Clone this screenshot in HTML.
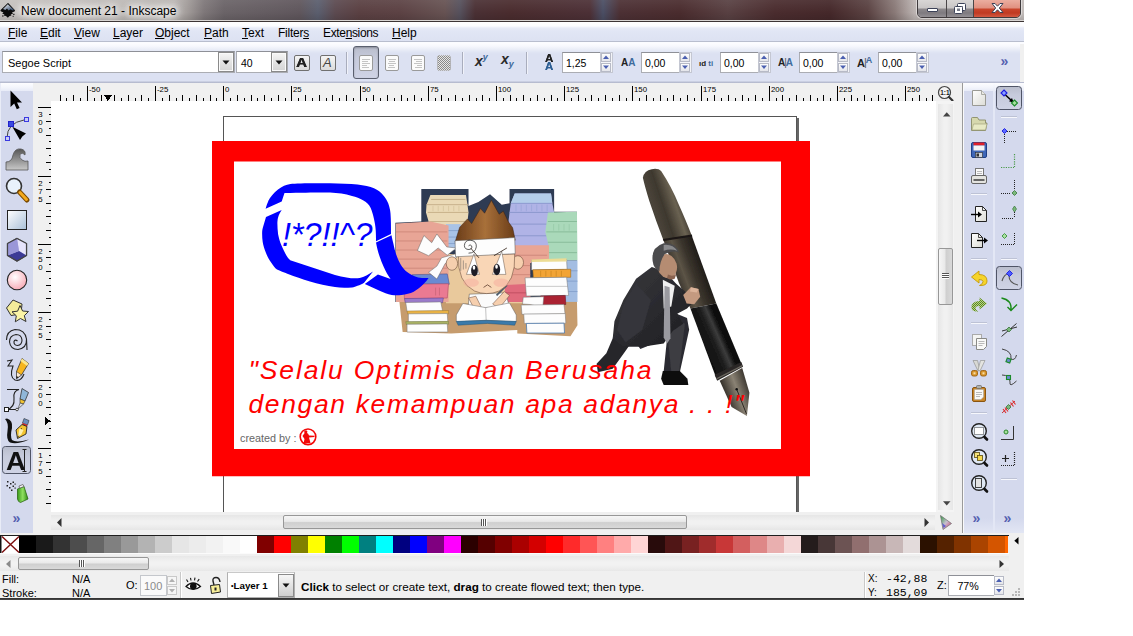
<!DOCTYPE html>
<html lang="en">
<head>
<meta charset="utf-8">
<title>New document 21 - Inkscape</title>
<style>
html,body{margin:0;padding:0;background:#fff;}
body{width:1133px;height:636px;overflow:hidden;position:relative;font-family:"Liberation Sans",sans-serif;font-size:12px;color:#000;}
#win{position:absolute;left:0;top:0;width:1024px;height:600px;background:#f0f0f0;overflow:hidden;}
.abs{position:absolute;}
#title{left:0;top:0;width:1024px;height:21px;background:linear-gradient(90deg,#c6c2bf 0px,#bab5b2 174px,#a29c9a 187px,#7e7779 204px,#6a6367 224px,#5f565c 300px,#5a5e6e 318px,#5c4a50 335px,#5a4042 360px,#5c4244 400px,#665252 445px,#55505c 460px,#4a3034 475px,#4a2c2e 510px,#4c3036 590px,#4a4e64 603px,#4c3034 620px,#4a2c2e 680px,#584042 728px,#4a2c2e 775px,#45282a 830px,#5a4242 868px,#8a7a78 895px,#bcb4b2 915px,#c2bcba 1024px);}
#title:after{content:"";position:absolute;left:0;top:0;width:1024px;height:21px;background:linear-gradient(180deg,rgba(255,255,255,.07),rgba(255,255,255,0) 60%,rgba(0,0,0,.12));}
#ttext{left:21px;top:4px;font-size:12px;line-height:15px;color:#000;white-space:nowrap;z-index:2;text-shadow:0 0 6px #fff,0 0 8px #fff,0 0 10px #fff,0 0 12px #fff;}
#tline{left:0;top:20px;width:1024px;height:2px;background:linear-gradient(180deg,#d8d5d3 0,#d8d5d3 1px,#3d3636 1px,#3d3636 2px);z-index:3;}
#menubar{left:0;top:22px;width:1024px;height:21px;background:linear-gradient(180deg,#ffffff 0,#fcfdff 4px,#e8ecf8 6px,#e1e6f5 9px,#dde2f2 19px,#b9bece 19px,#b9bece 20px,#fbfcff 20px);}
.mi{position:absolute;top:26px;line-height:15px;font-size:12px;white-space:nowrap;}
.mi u{text-decoration:underline;text-underline-offset:1px;}
#tbar{left:0;top:43px;width:1024px;height:40px;background:linear-gradient(180deg,#fdfdff 0,#f7f8fd 3px,#eceff8 6px,#e0e5f4 9px,#dce1f2 11px,#dce1f2 38px,#b9bed2 39px,#b4b9cd 40px);}
.inp{position:absolute;background:#fff;border:1px solid #abadb3;border-top-color:#8e9097;box-sizing:border-box;font-size:12px;line-height:15px;white-space:nowrap;}
.btn{position:absolute;box-sizing:border-box;border:1px solid #707070;border-radius:2px;background:linear-gradient(180deg,#f4f4f4,#dcdcdc);}
.tog{position:absolute;box-sizing:border-box;border:1px solid #5a5f6e;border-radius:3px;background:linear-gradient(180deg,#b9bdcc,#c6cadb 35%,#cfd3e5);box-shadow:inset 0 1px 2px rgba(0,0,0,.25);}
.lav{background:#d5daee;}
svg{position:absolute;overflow:visible;}
.t{position:absolute;white-space:nowrap;line-height:15px;}
</style>
</head>
<body>
<div id="win">

<div id="title" class="abs"></div>
<svg class="abs" style="left:0;top:0;z-index:2" width="20" height="20" viewBox="0 0 20 20">
<defs><linearGradient id="ikg" x1="0" y1="0" x2="1" y2="1"><stop offset="0" stop-color="#fff"/><stop offset=".45" stop-color="#9aa6b8"/><stop offset="1" stop-color="#1d3557"/></linearGradient></defs>
<path d="M7.6 3.2 L0.6 10 Q0 11 1.2 11.6 L3.5 12.6 L2.2 13.6 L4.5 14.4 L3.6 15.4 L6 16 L7.8 17.8 L9.6 16 L11.5 15.4 L10.6 14.4 L13 13.8 L12 12.6 L14.4 11.6 Q15.6 11 14.8 10 L8.4 3.2 Q8 2.8 7.6 3.2Z" fill="#0a0a0a"/>
<path d="M7.8 4.2 L3 9 L5.4 10 L7 8.6 L8.6 10.4 L10.6 9.2 L12.6 10.4 L14 10 Z" fill="url(#ikg)"/>
<rect x="2" y="15.5" width="1.6" height="1" fill="#111"/><rect x="13" y="13.8" width="1.6" height="1" fill="#111"/><rect x="12.6" y="15.8" width="1.2" height="1" fill="#222"/>
</svg>
<div class="abs" style="left:917px;top:-3px;width:104px;height:21px;border:1px solid #3f3a3c;border-radius:0 0 5px 5px;box-sizing:border-box;z-index:2;box-shadow:0 0 0 1px rgba(255,255,255,.45);overflow:hidden;">
 <div class="abs" style="left:0;top:0;width:28px;height:20px;background:linear-gradient(180deg,#dcdad9 0,#c9c6c6 10px,#8d898c 11px,#7e7a7f 15px,#9a969a 20px);border-right:1px solid #4a4648;"></div>
 <div class="abs" style="left:29px;top:0;width:26px;height:20px;background:linear-gradient(180deg,#dcdad9 0,#c9c6c6 10px,#8d898c 11px,#7e7a7f 15px,#9a969a 20px);border-right:1px solid #4a4648;"></div>
 <div class="abs" style="left:56px;top:0;width:48px;height:20px;background:linear-gradient(180deg,#eeb5a8 0,#e09080 10px,#c9452c 11px,#c03a22 15px,#d8604a 20px);"></div>
</div>
<svg class="abs" style="left:917px;top:0;z-index:3" width="104" height="18" viewBox="0 0 104 18">
 <rect x="10.5" y="8.5" width="10" height="3" rx="0.5" fill="#fff" stroke="#3c4258" stroke-width="1"/>
 <rect x="40.500" y="3.500" width="8" height="7" rx="1" fill="#fff" stroke="#3c4258"/><rect x="43" y="6" width="3" height="2" fill="#8a8c96"/>
 <rect x="37.500" y="6.500" width="8" height="7" rx="1" fill="#fff" stroke="#3c4258"/><rect x="40" y="8.500" width="3" height="2.500" fill="#777a88"/>
 <path d="M75 3.500 L78 3.500 L80.500 6.200 L83 3.500 L86 3.500 L82.300 8 L86 12.500 L83 12.500 L80.500 9.800 L78 12.500 L75 12.500 L78.700 8 Z" fill="#fff" stroke="#3c4258" stroke-width="1" stroke-linejoin="round"/>
</svg>

<div id="ttext" class="abs">New document 21 - Inkscape</div>
<div id="tline" class="abs"></div>
<div id="menubar" class="abs"></div>
<div class="mi" style="left:8px"><u>F</u>ile</div>
<div class="mi" style="left:40px"><u>E</u>dit</div>
<div class="mi" style="left:74px"><u>V</u>iew</div>
<div class="mi" style="left:113px"><u>L</u>ayer</div>
<div class="mi" style="left:155px"><u>O</u>bject</div>
<div class="mi" style="left:204px"><u>P</u>ath</div>
<div class="mi" style="left:242px"><u>T</u>ext</div>
<div class="mi" style="left:278px"><span style="letter-spacing:-0.25px">Filter<u>s</u></span></div>
<div class="mi" style="left:323px"><span style="letter-spacing:-0.35px">Exte<u>n</u>sions</span></div>
<div class="mi" style="left:392px"><u>H</u>elp</div>
<div id="tbar" class="abs"></div><div id="tbarend" class="abs" style="left:1020px;top:44px;width:4px;height:38px;background:#f0f0f0"></div>
<div class="inp" style="left:2px;top:51px;width:233px;height:22px;padding:4px 0 0 5px;font-size:11px">Segoe Script</div>
<div class="abs" style="left:218px;top:52px;width:16px;height:20px;box-sizing:border-box;border:1px solid #8a8a8a;background:linear-gradient(180deg,#f6f6f6,#e3e3e3 50%,#d4d4d4);box-shadow:inset 0 0 0 1px #fafafa"></div><svg style="left:222.0px;top:60.0px" width="8" height="5"><path d="M0.500 0.500 L7.500 0.500 L4 4.500 Z" fill="#111"/></svg>
<div class="inp" style="left:236px;top:51px;width:52px;height:22px;padding:4px 0 0 4px;font-size:10.500px">40</div>
<div class="abs" style="left:271px;top:52px;width:16px;height:20px;box-sizing:border-box;border:1px solid #8a8a8a;background:linear-gradient(180deg,#f6f6f6,#e3e3e3 50%,#d4d4d4);box-shadow:inset 0 0 0 1px #fafafa"></div><svg style="left:275.0px;top:60.0px" width="8" height="5"><path d="M0.500 0.500 L7.500 0.500 L4 4.500 Z" fill="#111"/></svg>
<div class="btn" style="left:294px;top:55px;width:16px;height:16px"></div>
<div class="t" style="left:296px;top:55px;font-weight:bold;font-size:13px;color:#222;transform:scaleX(1.15);transform-origin:0 0;text-shadow:0 0 .6px #222,.4px 0 0 #222">A</div>
<div class="btn" style="left:320px;top:55px;width:16px;height:16px"></div>
<div class="t" style="left:323px;top:55px;font-style:italic;font-size:13px;color:#444">A</div>
<div class="abs" style="left:346px;top:52px;width:1px;height:22px;background:#a9adbd"></div><div class="abs" style="left:347px;top:52px;width:1px;height:22px;background:#f0f2fa"></div>
<div class="abs" style="left:462px;top:52px;width:1px;height:22px;background:#a9adbd"></div><div class="abs" style="left:463px;top:52px;width:1px;height:22px;background:#f0f2fa"></div>
<div class="abs" style="left:526px;top:52px;width:1px;height:22px;background:#a9adbd"></div><div class="abs" style="left:527px;top:52px;width:1px;height:22px;background:#f0f2fa"></div>
<div class="tog" style="left:353px;top:46px;width:26px;height:33px"></div>
<svg style="left:359px;top:55px" width="14" height="16" viewBox="0 0 14 16"><rect x="0.500" y="0.500" width="13" height="15" rx="1.500" fill="#fbfbfb" stroke="#9a9a9a"/><rect x="3" y="4" width="8" height="1" fill="#c4c4c4" shape-rendering="crispEdges"/><rect x="3" y="6" width="6" height="1" fill="#c4c4c4" shape-rendering="crispEdges"/><rect x="3" y="8" width="8" height="1" fill="#c4c4c4" shape-rendering="crispEdges"/><rect x="3" y="10" width="5" height="1" fill="#c4c4c4" shape-rendering="crispEdges"/><rect x="3" y="12" width="7" height="1" fill="#c4c4c4" shape-rendering="crispEdges"/></svg>
<svg style="left:385px;top:55px" width="14" height="16" viewBox="0 0 14 16"><rect x="0.500" y="0.500" width="13" height="15" rx="1.500" fill="#fbfbfb" stroke="#9a9a9a"/><rect x="3" y="4" width="8" height="1" fill="#c4c4c4" shape-rendering="crispEdges"/><rect x="4" y="6" width="6" height="1" fill="#c4c4c4" shape-rendering="crispEdges"/><rect x="3" y="8" width="8" height="1" fill="#c4c4c4" shape-rendering="crispEdges"/><rect x="4" y="10" width="5" height="1" fill="#c4c4c4" shape-rendering="crispEdges"/><rect x="3" y="12" width="7" height="1" fill="#c4c4c4" shape-rendering="crispEdges"/></svg>
<svg style="left:411px;top:55px" width="14" height="16" viewBox="0 0 14 16"><rect x="0.500" y="0.500" width="13" height="15" rx="1.500" fill="#fbfbfb" stroke="#9a9a9a"/><rect x="3" y="4" width="8" height="1" fill="#c4c4c4" shape-rendering="crispEdges"/><rect x="5" y="6" width="6" height="1" fill="#c4c4c4" shape-rendering="crispEdges"/><rect x="3" y="8" width="8" height="1" fill="#c4c4c4" shape-rendering="crispEdges"/><rect x="6" y="10" width="5" height="1" fill="#c4c4c4" shape-rendering="crispEdges"/><rect x="4" y="12" width="7" height="1" fill="#c4c4c4" shape-rendering="crispEdges"/></svg>
<svg style="left:437px;top:55px" width="14" height="16" viewBox="0 0 14 16"><defs><pattern id="dots" width="2" height="2" patternUnits="userSpaceOnUse"><rect width="1" height="1" fill="#8a8a8a"/><rect x="1" y="1" width="1" height="1" fill="#8a8a8a"/></pattern></defs><rect x="0.500" y="0.500" width="13" height="15" rx="1.500" fill="#e6e6e6"/><rect x="0.500" y="0.500" width="13" height="15" rx="1.500" fill="url(#dots)" stroke="#aaa" stroke-dasharray="1 1"/></svg>
<div class="t" style="left:475px;top:54px;font-weight:bold;font-style:italic;font-size:14px;color:#2b2b2b">x<span style="font-size:9px;color:#3d6a9c;position:relative;top:-6px;left:0px">y</span></div>
<div class="t" style="left:501px;top:52px;font-weight:bold;font-style:italic;font-size:14px;color:#2b2b2b">x<span style="font-size:9px;color:#3d6a9c;position:relative;top:3px;left:0px">y</span></div>
<div class="t" style="left:544.500px;top:54px;font-weight:bold;font-size:10px;line-height:9px;color:#222;transform:scaleX(1.15);transform-origin:0 0;text-shadow:0 0 .5px #222">A</div>
<div class="t" style="left:544.500px;top:62px;font-weight:bold;font-size:10px;line-height:9px;color:#2d5f94;transform:scaleX(1.15);transform-origin:0 0;text-shadow:0 0 .5px #2d5f94">A</div>
<div class="inp" style="left:562px;top:52px;width:38px;height:21px;padding:3px 0 0 3px;border-right:0;font-size:10.500px">1,25</div><div class="abs" style="left:600px;top:52px;width:13px;height:21px;box-sizing:border-box;border:1px solid #c4c7d2;background:#f3f4f8"></div><div class="abs" style="left:601px;top:53px;width:10px;height:9px;box-sizing:border-box;border:1px solid #b7bac6;background:linear-gradient(180deg,#fdfdfd,#e4e5ea)"></div><div class="abs" style="left:601px;top:63px;width:10px;height:9px;box-sizing:border-box;border:1px solid #b7bac6;background:linear-gradient(180deg,#fdfdfd,#e4e5ea)"></div><svg style="left:603px;top:55px" width="6" height="14"><path d="M0 4 L3 0.500 L6 4Z" fill="#4a5fb0"/><path d="M0 10.500 L3 14 L6 10.500Z" fill="#4a5fb0"/></svg>
<div class="inp" style="left:641px;top:52px;width:38px;height:21px;padding:3px 0 0 3px;border-right:0;font-size:10.500px">0,00</div><div class="abs" style="left:679px;top:52px;width:13px;height:21px;box-sizing:border-box;border:1px solid #c4c7d2;background:#f3f4f8"></div><div class="abs" style="left:680px;top:53px;width:10px;height:9px;box-sizing:border-box;border:1px solid #b7bac6;background:linear-gradient(180deg,#fdfdfd,#e4e5ea)"></div><div class="abs" style="left:680px;top:63px;width:10px;height:9px;box-sizing:border-box;border:1px solid #b7bac6;background:linear-gradient(180deg,#fdfdfd,#e4e5ea)"></div><svg style="left:682px;top:55px" width="6" height="14"><path d="M0 4 L3 0.500 L6 4Z" fill="#4a5fb0"/><path d="M0 10.500 L3 14 L6 10.500Z" fill="#4a5fb0"/></svg>
<div class="inp" style="left:720px;top:52px;width:38px;height:21px;padding:3px 0 0 3px;border-right:0;font-size:10.500px">0,00</div><div class="abs" style="left:758px;top:52px;width:13px;height:21px;box-sizing:border-box;border:1px solid #c4c7d2;background:#f3f4f8"></div><div class="abs" style="left:759px;top:53px;width:10px;height:9px;box-sizing:border-box;border:1px solid #b7bac6;background:linear-gradient(180deg,#fdfdfd,#e4e5ea)"></div><div class="abs" style="left:759px;top:63px;width:10px;height:9px;box-sizing:border-box;border:1px solid #b7bac6;background:linear-gradient(180deg,#fdfdfd,#e4e5ea)"></div><svg style="left:761px;top:55px" width="6" height="14"><path d="M0 4 L3 0.500 L6 4Z" fill="#4a5fb0"/><path d="M0 10.500 L3 14 L6 10.500Z" fill="#4a5fb0"/></svg>
<div class="inp" style="left:799px;top:52px;width:38px;height:21px;padding:3px 0 0 3px;border-right:0;font-size:10.500px">0,00</div><div class="abs" style="left:837px;top:52px;width:13px;height:21px;box-sizing:border-box;border:1px solid #c4c7d2;background:#f3f4f8"></div><div class="abs" style="left:838px;top:53px;width:10px;height:9px;box-sizing:border-box;border:1px solid #b7bac6;background:linear-gradient(180deg,#fdfdfd,#e4e5ea)"></div><div class="abs" style="left:838px;top:63px;width:10px;height:9px;box-sizing:border-box;border:1px solid #b7bac6;background:linear-gradient(180deg,#fdfdfd,#e4e5ea)"></div><svg style="left:840px;top:55px" width="6" height="14"><path d="M0 4 L3 0.500 L6 4Z" fill="#4a5fb0"/><path d="M0 10.500 L3 14 L6 10.500Z" fill="#4a5fb0"/></svg>
<div class="inp" style="left:878px;top:52px;width:38px;height:21px;padding:3px 0 0 3px;border-right:0;font-size:10.500px">0,00</div><div class="abs" style="left:916px;top:52px;width:13px;height:21px;box-sizing:border-box;border:1px solid #c4c7d2;background:#f3f4f8"></div><div class="abs" style="left:917px;top:53px;width:10px;height:9px;box-sizing:border-box;border:1px solid #b7bac6;background:linear-gradient(180deg,#fdfdfd,#e4e5ea)"></div><div class="abs" style="left:917px;top:63px;width:10px;height:9px;box-sizing:border-box;border:1px solid #b7bac6;background:linear-gradient(180deg,#fdfdfd,#e4e5ea)"></div><svg style="left:919px;top:55px" width="6" height="14"><path d="M0 4 L3 0.500 L6 4Z" fill="#4a5fb0"/><path d="M0 10.500 L3 14 L6 10.500Z" fill="#4a5fb0"/></svg>
<div class="t" style="left:621px;top:55px;font-weight:bold;font-size:10px;color:#222;letter-spacing:0">A<span style="color:#3d6a9c">A</span></div>
<div class="t" style="left:699px;top:56px;font-weight:bold;font-size:8px;color:#222">ıd <span style="color:#3d6a9c">ti</span></div>
<div class="t" style="left:778px;top:55px;font-weight:bold;font-size:10px;color:#222">A<span style="color:#555;font-weight:normal;margin:0 -1px">|</span><span style="color:#3d6a9c">A</span></div>
<div class="t" style="left:857px;top:56px;font-weight:bold;font-size:11px;color:#222">A<span style="color:#555;font-weight:normal;margin:0 -1px;position:relative;top:-1px">|</span><span style="color:#3d6a9c;font-size:9px;position:relative;top:-4px">A</span></div>
<div class="t" style="left:1000.500px;top:54px;font-size:14px;color:#5560b0;letter-spacing:-1.500px;font-weight:bold">&raquo;</div>
<div class="abs" style="left:33px;top:83px;width:930px;height:18px;background:#f0f0f0"></div>
<div class="abs" style="left:33px;top:101px;width:18px;height:411px;background:#f0f0f0"></div>
<svg style="left:0;top:83px" width="940" height="18" viewBox="0 83 940 18" shape-rendering="crispEdges"><rect x="60" y="95" width="1" height="6" fill="#000"/><rect x="66" y="98" width="1" height="3" fill="#000"/><rect x="73" y="95" width="1" height="6" fill="#000"/><rect x="80" y="98" width="1" height="3" fill="#000"/><rect x="87" y="86" width="1" height="15" fill="#000"/><rect x="94" y="98" width="1" height="3" fill="#000"/><rect x="101" y="95" width="1" height="6" fill="#000"/><rect x="107" y="98" width="1" height="3" fill="#000"/><rect x="114" y="95" width="1" height="6" fill="#000"/><rect x="121" y="98" width="1" height="3" fill="#000"/><rect x="128" y="95" width="1" height="6" fill="#000"/><rect x="135" y="98" width="1" height="3" fill="#000"/><rect x="141" y="95" width="1" height="6" fill="#000"/><rect x="148" y="98" width="1" height="3" fill="#000"/><rect x="155" y="86" width="1" height="15" fill="#000"/><rect x="162" y="98" width="1" height="3" fill="#000"/><rect x="169" y="95" width="1" height="6" fill="#000"/><rect x="176" y="98" width="1" height="3" fill="#000"/><rect x="182" y="95" width="1" height="6" fill="#000"/><rect x="189" y="98" width="1" height="3" fill="#000"/><rect x="196" y="95" width="1" height="6" fill="#000"/><rect x="203" y="98" width="1" height="3" fill="#000"/><rect x="210" y="95" width="1" height="6" fill="#000"/><rect x="216" y="98" width="1" height="3" fill="#000"/><rect x="223" y="86" width="1" height="15" fill="#000"/><rect x="230" y="98" width="1" height="3" fill="#000"/><rect x="237" y="95" width="1" height="6" fill="#000"/><rect x="244" y="98" width="1" height="3" fill="#000"/><rect x="251" y="95" width="1" height="6" fill="#000"/><rect x="257" y="98" width="1" height="3" fill="#000"/><rect x="264" y="95" width="1" height="6" fill="#000"/><rect x="271" y="98" width="1" height="3" fill="#000"/><rect x="278" y="95" width="1" height="6" fill="#000"/><rect x="285" y="98" width="1" height="3" fill="#000"/><rect x="291" y="86" width="1" height="15" fill="#000"/><rect x="298" y="98" width="1" height="3" fill="#000"/><rect x="305" y="95" width="1" height="6" fill="#000"/><rect x="312" y="98" width="1" height="3" fill="#000"/><rect x="319" y="95" width="1" height="6" fill="#000"/><rect x="326" y="98" width="1" height="3" fill="#000"/><rect x="332" y="95" width="1" height="6" fill="#000"/><rect x="339" y="98" width="1" height="3" fill="#000"/><rect x="346" y="95" width="1" height="6" fill="#000"/><rect x="353" y="98" width="1" height="3" fill="#000"/><rect x="360" y="86" width="1" height="15" fill="#000"/><rect x="366" y="98" width="1" height="3" fill="#000"/><rect x="373" y="95" width="1" height="6" fill="#000"/><rect x="380" y="98" width="1" height="3" fill="#000"/><rect x="387" y="95" width="1" height="6" fill="#000"/><rect x="394" y="98" width="1" height="3" fill="#000"/><rect x="401" y="95" width="1" height="6" fill="#000"/><rect x="407" y="98" width="1" height="3" fill="#000"/><rect x="414" y="95" width="1" height="6" fill="#000"/><rect x="421" y="98" width="1" height="3" fill="#000"/><rect x="428" y="86" width="1" height="15" fill="#000"/><rect x="435" y="98" width="1" height="3" fill="#000"/><rect x="441" y="95" width="1" height="6" fill="#000"/><rect x="448" y="98" width="1" height="3" fill="#000"/><rect x="455" y="95" width="1" height="6" fill="#000"/><rect x="462" y="98" width="1" height="3" fill="#000"/><rect x="469" y="95" width="1" height="6" fill="#000"/><rect x="476" y="98" width="1" height="3" fill="#000"/><rect x="482" y="95" width="1" height="6" fill="#000"/><rect x="489" y="98" width="1" height="3" fill="#000"/><rect x="496" y="86" width="1" height="15" fill="#000"/><rect x="503" y="98" width="1" height="3" fill="#000"/><rect x="510" y="95" width="1" height="6" fill="#000"/><rect x="516" y="98" width="1" height="3" fill="#000"/><rect x="523" y="95" width="1" height="6" fill="#000"/><rect x="530" y="98" width="1" height="3" fill="#000"/><rect x="537" y="95" width="1" height="6" fill="#000"/><rect x="544" y="98" width="1" height="3" fill="#000"/><rect x="551" y="95" width="1" height="6" fill="#000"/><rect x="557" y="98" width="1" height="3" fill="#000"/><rect x="564" y="86" width="1" height="15" fill="#000"/><rect x="571" y="98" width="1" height="3" fill="#000"/><rect x="578" y="95" width="1" height="6" fill="#000"/><rect x="585" y="98" width="1" height="3" fill="#000"/><rect x="591" y="95" width="1" height="6" fill="#000"/><rect x="598" y="98" width="1" height="3" fill="#000"/><rect x="605" y="95" width="1" height="6" fill="#000"/><rect x="612" y="98" width="1" height="3" fill="#000"/><rect x="619" y="95" width="1" height="6" fill="#000"/><rect x="626" y="98" width="1" height="3" fill="#000"/><rect x="632" y="86" width="1" height="15" fill="#000"/><rect x="639" y="98" width="1" height="3" fill="#000"/><rect x="646" y="95" width="1" height="6" fill="#000"/><rect x="653" y="98" width="1" height="3" fill="#000"/><rect x="660" y="95" width="1" height="6" fill="#000"/><rect x="667" y="98" width="1" height="3" fill="#000"/><rect x="673" y="95" width="1" height="6" fill="#000"/><rect x="680" y="98" width="1" height="3" fill="#000"/><rect x="687" y="95" width="1" height="6" fill="#000"/><rect x="694" y="98" width="1" height="3" fill="#000"/><rect x="701" y="86" width="1" height="15" fill="#000"/><rect x="707" y="98" width="1" height="3" fill="#000"/><rect x="714" y="95" width="1" height="6" fill="#000"/><rect x="721" y="98" width="1" height="3" fill="#000"/><rect x="728" y="95" width="1" height="6" fill="#000"/><rect x="735" y="98" width="1" height="3" fill="#000"/><rect x="742" y="95" width="1" height="6" fill="#000"/><rect x="748" y="98" width="1" height="3" fill="#000"/><rect x="755" y="95" width="1" height="6" fill="#000"/><rect x="762" y="98" width="1" height="3" fill="#000"/><rect x="769" y="86" width="1" height="15" fill="#000"/><rect x="776" y="98" width="1" height="3" fill="#000"/><rect x="782" y="95" width="1" height="6" fill="#000"/><rect x="789" y="98" width="1" height="3" fill="#000"/><rect x="796" y="95" width="1" height="6" fill="#000"/><rect x="803" y="98" width="1" height="3" fill="#000"/><rect x="810" y="95" width="1" height="6" fill="#000"/><rect x="817" y="98" width="1" height="3" fill="#000"/><rect x="823" y="95" width="1" height="6" fill="#000"/><rect x="830" y="98" width="1" height="3" fill="#000"/><rect x="837" y="86" width="1" height="15" fill="#000"/><rect x="844" y="98" width="1" height="3" fill="#000"/><rect x="851" y="95" width="1" height="6" fill="#000"/><rect x="857" y="98" width="1" height="3" fill="#000"/><rect x="864" y="95" width="1" height="6" fill="#000"/><rect x="871" y="98" width="1" height="3" fill="#000"/><rect x="878" y="95" width="1" height="6" fill="#000"/><rect x="885" y="98" width="1" height="3" fill="#000"/><rect x="892" y="95" width="1" height="6" fill="#000"/><rect x="898" y="98" width="1" height="3" fill="#000"/><rect x="905" y="86" width="1" height="15" fill="#000"/><rect x="912" y="98" width="1" height="3" fill="#000"/><rect x="919" y="95" width="1" height="6" fill="#000"/><rect x="926" y="98" width="1" height="3" fill="#000"/><rect x="932" y="95" width="1" height="6" fill="#000"/><path d="M103.500 95 L112.500 95 L108 100.500Z" fill="#000"/></svg>
<svg style="left:0;top:83px" width="940" height="18" viewBox="0 83 940 18"><text x="89" y="92" font-size="7.800" font-family="Liberation Sans, sans-serif" fill="#000">-50</text><text x="157" y="92" font-size="7.800" font-family="Liberation Sans, sans-serif" fill="#000">-25</text><text x="225" y="92" font-size="7.800" font-family="Liberation Sans, sans-serif" fill="#000">0</text><text x="293" y="92" font-size="7.800" font-family="Liberation Sans, sans-serif" fill="#000">25</text><text x="362" y="92" font-size="7.800" font-family="Liberation Sans, sans-serif" fill="#000">50</text><text x="430" y="92" font-size="7.800" font-family="Liberation Sans, sans-serif" fill="#000">75</text><text x="498" y="92" font-size="7.800" font-family="Liberation Sans, sans-serif" fill="#000">100</text><text x="566" y="92" font-size="7.800" font-family="Liberation Sans, sans-serif" fill="#000">125</text><text x="634" y="92" font-size="7.800" font-family="Liberation Sans, sans-serif" fill="#000">150</text><text x="703" y="92" font-size="7.800" font-family="Liberation Sans, sans-serif" fill="#000">175</text><text x="771" y="92" font-size="7.800" font-family="Liberation Sans, sans-serif" fill="#000">200</text><text x="839" y="92" font-size="7.800" font-family="Liberation Sans, sans-serif" fill="#000">225</text><text x="907" y="92" font-size="7.800" font-family="Liberation Sans, sans-serif" fill="#000">250</text></svg>
<svg style="left:34px;top:101px" width="18" height="411" viewBox="34 101 18 411" shape-rendering="crispEdges"><rect x="38" y="107" width="13" height="1" fill="#000"/><rect x="49" y="114" width="2" height="1" fill="#000"/><rect x="46" y="121" width="5" height="1" fill="#000"/><rect x="49" y="128" width="2" height="1" fill="#000"/><rect x="46" y="135" width="5" height="1" fill="#000"/><rect x="49" y="141" width="2" height="1" fill="#000"/><rect x="46" y="148" width="5" height="1" fill="#000"/><rect x="49" y="155" width="2" height="1" fill="#000"/><rect x="46" y="162" width="5" height="1" fill="#000"/><rect x="49" y="169" width="2" height="1" fill="#000"/><rect x="38" y="176" width="13" height="1" fill="#000"/><rect x="49" y="182" width="2" height="1" fill="#000"/><rect x="46" y="189" width="5" height="1" fill="#000"/><rect x="49" y="196" width="2" height="1" fill="#000"/><rect x="46" y="203" width="5" height="1" fill="#000"/><rect x="49" y="210" width="2" height="1" fill="#000"/><rect x="46" y="216" width="5" height="1" fill="#000"/><rect x="49" y="223" width="2" height="1" fill="#000"/><rect x="46" y="230" width="5" height="1" fill="#000"/><rect x="49" y="237" width="2" height="1" fill="#000"/><rect x="38" y="244" width="13" height="1" fill="#000"/><rect x="49" y="251" width="2" height="1" fill="#000"/><rect x="46" y="257" width="5" height="1" fill="#000"/><rect x="49" y="264" width="2" height="1" fill="#000"/><rect x="46" y="271" width="5" height="1" fill="#000"/><rect x="49" y="278" width="2" height="1" fill="#000"/><rect x="46" y="285" width="5" height="1" fill="#000"/><rect x="49" y="291" width="2" height="1" fill="#000"/><rect x="46" y="298" width="5" height="1" fill="#000"/><rect x="49" y="305" width="2" height="1" fill="#000"/><rect x="38" y="312" width="13" height="1" fill="#000"/><rect x="49" y="319" width="2" height="1" fill="#000"/><rect x="46" y="326" width="5" height="1" fill="#000"/><rect x="49" y="332" width="2" height="1" fill="#000"/><rect x="46" y="339" width="5" height="1" fill="#000"/><rect x="49" y="346" width="2" height="1" fill="#000"/><rect x="46" y="353" width="5" height="1" fill="#000"/><rect x="49" y="360" width="2" height="1" fill="#000"/><rect x="46" y="367" width="5" height="1" fill="#000"/><rect x="49" y="373" width="2" height="1" fill="#000"/><rect x="38" y="380" width="13" height="1" fill="#000"/><rect x="49" y="387" width="2" height="1" fill="#000"/><rect x="46" y="394" width="5" height="1" fill="#000"/><rect x="49" y="401" width="2" height="1" fill="#000"/><rect x="46" y="407" width="5" height="1" fill="#000"/><rect x="49" y="414" width="2" height="1" fill="#000"/><rect x="46" y="421" width="5" height="1" fill="#000"/><rect x="49" y="428" width="2" height="1" fill="#000"/><rect x="46" y="435" width="5" height="1" fill="#000"/><rect x="49" y="442" width="2" height="1" fill="#000"/><rect x="38" y="448" width="13" height="1" fill="#000"/><rect x="49" y="455" width="2" height="1" fill="#000"/><rect x="46" y="462" width="5" height="1" fill="#000"/><rect x="49" y="469" width="2" height="1" fill="#000"/><rect x="46" y="476" width="5" height="1" fill="#000"/><rect x="49" y="482" width="2" height="1" fill="#000"/><rect x="46" y="489" width="5" height="1" fill="#000"/><rect x="49" y="496" width="2" height="1" fill="#000"/><rect x="46" y="503" width="5" height="1" fill="#000"/><path d="M45 417 L45 425 L50.500 421Z" fill="#000"/></svg>
<svg style="left:34px;top:101px" width="18" height="411" viewBox="34 101 18 411"><text x="38.300" y="116.5" font-size="7.800" font-family="Liberation Sans, sans-serif" fill="#000">3</text><text x="38.300" y="124.8" font-size="7.800" font-family="Liberation Sans, sans-serif" fill="#000">0</text><text x="38.300" y="133.1" font-size="7.800" font-family="Liberation Sans, sans-serif" fill="#000">0</text><text x="38.300" y="185.5" font-size="7.800" font-family="Liberation Sans, sans-serif" fill="#000">2</text><text x="38.300" y="193.8" font-size="7.800" font-family="Liberation Sans, sans-serif" fill="#000">7</text><text x="38.300" y="202.1" font-size="7.800" font-family="Liberation Sans, sans-serif" fill="#000">5</text><text x="38.300" y="253.5" font-size="7.800" font-family="Liberation Sans, sans-serif" fill="#000">2</text><text x="38.300" y="261.8" font-size="7.800" font-family="Liberation Sans, sans-serif" fill="#000">5</text><text x="38.300" y="270.1" font-size="7.800" font-family="Liberation Sans, sans-serif" fill="#000">0</text><text x="38.300" y="321.5" font-size="7.800" font-family="Liberation Sans, sans-serif" fill="#000">2</text><text x="38.300" y="329.8" font-size="7.800" font-family="Liberation Sans, sans-serif" fill="#000">2</text><text x="38.300" y="338.1" font-size="7.800" font-family="Liberation Sans, sans-serif" fill="#000">5</text><text x="38.300" y="389.5" font-size="7.800" font-family="Liberation Sans, sans-serif" fill="#000">2</text><text x="38.300" y="397.8" font-size="7.800" font-family="Liberation Sans, sans-serif" fill="#000">0</text><text x="38.300" y="406.1" font-size="7.800" font-family="Liberation Sans, sans-serif" fill="#000">0</text><text x="38.300" y="457.5" font-size="7.800" font-family="Liberation Sans, sans-serif" fill="#000">1</text><text x="38.300" y="465.8" font-size="7.800" font-family="Liberation Sans, sans-serif" fill="#000">7</text><text x="38.300" y="474.1" font-size="7.800" font-family="Liberation Sans, sans-serif" fill="#000">5</text></svg>
<svg style="left:937px;top:85px" width="17" height="17" viewBox="0 0 17 17"><circle cx="7.500" cy="7.500" r="6" fill="#f4f4f4" stroke="#444" stroke-width="1.200"/><path d="M12 12 L15.500 15.500" stroke="#333" stroke-width="2.200" stroke-linecap="round"/><text x="3.200" y="10" font-size="6.500" font-weight="bold" font-family="Liberation Sans, sans-serif" fill="#222">1:1</text></svg>
<div class="abs" style="left:51px;top:101px;width:885px;height:411px;background:#fff;overflow:hidden">
<svg style="left:-51px;top:-101px" width="1024" height="600" viewBox="0 0 1024 600">
<!-- page border + shadow -->
<rect x="797" y="118" width="2" height="400" fill="#666"/>
<rect x="223.500" y="116.500" width="573" height="420" fill="#fff" stroke="#555" stroke-width="1"/>
<!-- red frame -->
<path d="M212 141 H810 V476.300 H212 Z M234 161.500 H781 V449 H234 Z" fill="#ff0000" fill-rule="evenodd"/>
<!-- books + kid : coordinates in zoomed space, scale .2594 -->
<g transform="translate(385,180) scale(0.2594)">
<defs>
<linearGradient id="hairg" x1="0" y1="0" x2="1" y2="0"><stop offset="0" stop-color="#6a3c18"/><stop offset=".5" stop-color="#a8703a"/><stop offset="1" stop-color="#6a3c18"/></linearGradient>
<filter id="soft" x="-5%" y="-5%" width="110%" height="110%"><feGaussianBlur stdDeviation="1.600"/></filter>
</defs>
<g filter="url(#soft)">
<path d="M140 35 L322 35 L322 100 L360 85 L405 55 L450 95 L480 90 L480 35 L652 35 L652 122 L740 122 L740 470 L40 470 L40 165 L140 160 Z" fill="#2f3b52"/>
<!-- table -->
<path d="M55 465 L740 465 L742 560 L715 602 L510 592 L510 578 L255 592 L68 586 Z" fill="#c69c6e"/>
<path d="M235 285 L540 285 L540 475 L235 475Z" fill="#e9c99c"/>
<!-- cream stack -->
<path d="M175 58 L312 58 L318 95 L322 125 L318 160 L330 200 L160 200 L168 160 L158 125 L160 95 Z" fill="#ead9b6"/>
<path d="M160 95 H322 M165 125 H320 M170 160 H318 M178 75 H310" stroke="#bfa780" stroke-width="3" fill="none"/>
<g stroke="#cdb890" stroke-width="2"><path d="M185 100 V120 M205 100 V120 M225 100 V120 M245 100 V120 M265 100 V120 M285 100 V120"/></g>
<!-- small blue stack -->
<path d="M235 170 L292 170 L292 270 L235 270Z" fill="#a9c3e6"/>
<path d="M235 195 H292 M235 220 H292 M235 245 H292" stroke="#7f9cc8" stroke-width="3"/>
<!-- left salmon stack -->
<path d="M42 168 L175 160 L245 175 L245 470 L42 470 Z" fill="#e8a596"/>
<path d="M42 200 H240 M42 235 H240 M42 270 H240 M42 305 H240 M42 340 H240" stroke="#c98274" stroke-width="3"/>
<!-- periwinkle stack -->
<path d="M500 52 L640 52 L645 90 L652 125 L640 170 L650 215 L640 255 L478 255 L485 215 L475 170 L480 125 L485 90Z" fill="#b0b3e6"/>
<path d="M500 52 L640 52 L645 90 L485 90Z" fill="#b4cdea"/>
<path d="M485 90 H645 M480 125 H650 M478 170 H642 M483 215 H648" stroke="#8290c8" stroke-width="3"/>
<g stroke="#8fa0d4" stroke-width="2"><path d="M505 95 V120 M525 95 V120 M545 95 V120 M565 95 V120 M585 95 V120 M605 95 V120 M625 95 V120"/></g>
<!-- green stack -->
<path d="M628 125 L740 122 L742 310 L620 310 L630 250 L618 200 Z" fill="#aad9ba"/>
<path d="M628 160 H740 M622 200 H740 M628 240 H740 M624 280 H740" stroke="#7fb492" stroke-width="3"/>
<g stroke="#8cc09e" stroke-width="2"><path d="M650 170 V195 M670 170 V195 M690 170 V195 M710 170 V195"/></g>
<!-- right blue -->
<path d="M690 310 L742 310 L742 470 L690 470Z" fill="#a3bde2"/>
<path d="M690 350 H742 M690 390 H742 M690 430 H742" stroke="#7f9cc8" stroke-width="3"/>
<!-- mid right salmon -->
<path d="M470 252 L632 252 L632 320 L560 320 L560 470 L470 470 Z" fill="#e9a594"/>
<path d="M470 290 H625 M470 330 H560 M470 365 H560" stroke="#c98274" stroke-width="3"/>
<path d="M462 405 L560 400 L560 470 L462 470Z" fill="#e06a7c"/>
<path d="M462 435 H560" stroke="#b84a5c" stroke-width="3"/>
<!-- left front stack -->
<path d="M105 365 L240 362 L248 402 L105 402Z" fill="#6a8ad2" stroke="#3a4a8a" stroke-width="2"/>
<path d="M72 402 L245 400 L240 455 L75 458 Z" fill="#ea7a92" stroke="#a84a5c" stroke-width="2"/>
<path d="M195 415 V445 M210 415 V445" stroke="#b85a6c" stroke-width="2"/>
<path d="M75 457 L225 455 L222 473 L78 473Z" fill="#9a7aca" stroke="#5a3a8a" stroke-width="2"/>
<path d="M80 472 L215 470 L222 505 L85 507Z" fill="#fdfdfd" stroke="#777" stroke-width="2"/>
<path d="M85 505 L245 503 L245 516 L88 517Z" fill="#e9b244" stroke="#8a6a2a" stroke-width="1.500"/>
<path d="M90 516 L240 515 L242 546 L90 547Z" fill="#fdfdfd" stroke="#777" stroke-width="2"/>
<path d="M80 546 L245 545 L245 556 L82 557Z" fill="#a9b264" stroke="#6a7234" stroke-width="1.500"/>
<path d="M85 556 L240 555 L242 586 L85 586Z" fill="#fdfdfd" stroke="#777" stroke-width="2"/>
<!-- right front stack -->
<path d="M565 310 L700 306 L702 345 L565 347Z" fill="#fdfdfd" stroke="#777" stroke-width="2"/>
<path d="M565 306 L700 302 L700 314 L565 316Z" fill="#ecdc94"/>
<path d="M570 346 L716 344 L716 375 L572 377 Z" fill="#f2a434" stroke="#9a6414" stroke-width="2"/>
<g stroke="#b87a1a" stroke-width="2"><path d="M600 350 V372 M620 350 V372 M640 350 V372 M660 350 V372 M680 350 V372"/></g>
<path d="M540 377 L700 375 L708 445 L545 447Z" fill="#fdfdfd" stroke="#777" stroke-width="2"/>
<path d="M545 410 H705" stroke="#999" stroke-width="2"/>
<path d="M600 447 L695 445 L697 480 L600 482Z" fill="#aa2232" stroke="#6a1220" stroke-width="2"/>
<path d="M533 452 L612 450 L608 492 L560 480 L530 478Z" fill="#fdfdfd" stroke="#777" stroke-width="2"/>
<path d="M525 482 L690 480 L694 516 L528 518Z" fill="#fdfdfd" stroke="#777" stroke-width="2"/>
<path d="M535 517 L695 515 L697 552 L537 553Z" fill="#fdfdfd" stroke="#777" stroke-width="2"/>
<path d="M545 553 L690 552 L692 590 L547 590Z" fill="#fdfdfd" stroke="#4a7ab2" stroke-width="3"/>
<!-- body -->
<path d="M325 440 L465 435 L480 490 L320 495Z" fill="#fbfbfb" stroke="#555" stroke-width="2"/>
<path d="M322 455 L350 448 L372 492 L345 498Z" fill="#f6cfae" stroke="#6a4a3a" stroke-width="2"/>
<path d="M415 478 L460 430 L480 445 L440 495Z" fill="#f6cfae" stroke="#6a4a3a" stroke-width="2"/>
<path d="M430 445 L470 405" stroke="#4a5a6a" stroke-width="7"/>
<!-- open book -->
<path d="M275 520 L300 476 L388 492 L480 474 L506 520 L506 546 L390 541 L275 546 Z" fill="#fefefe" stroke="#666" stroke-width="2"/>
<path d="M388 492 L390 541" stroke="#888" stroke-width="2"/>
<path d="M275 545 L390 541 L506 545 L500 560 L395 553 L282 560Z" fill="#3a7aaa" stroke="#1a4a6a" stroke-width="1.500"/>
<!-- headband tails -->
<path d="M275 262 L238 258 L200 208 L180 242 L150 214 L125 272 L168 292 L205 262 L240 290 Z" fill="#fdfdfd" stroke="#666" stroke-width="2"/>
<path d="M272 285 L218 300 L200 332 L168 356 L200 382 L232 322 L275 300Z" fill="#fdfdfd" stroke="#666" stroke-width="2"/>
<!-- ears -->
<ellipse cx="258" cy="322" rx="22" ry="26" fill="#f6cfae" stroke="#5a3a2a" stroke-width="2"/>
<ellipse cx="512" cy="318" rx="22" ry="26" fill="#f6cfae" stroke="#5a3a2a" stroke-width="2"/>
<!-- face -->
<path d="M283 290 Q278 395 345 428 Q392 448 440 428 Q505 395 500 285 Z" fill="#f9d6b6" stroke="#5a3a2a" stroke-width="2"/>
<ellipse cx="332" cy="396" rx="30" ry="16" fill="#f4a097" opacity=".4"/>
<ellipse cx="448" cy="396" rx="30" ry="16" fill="#f4a097" opacity=".4"/>
<!-- hair -->
<path d="M270 240 L288 182 L318 150 L334 168 L368 110 L384 128 L410 78 L440 132 L456 120 L476 162 L492 184 L502 232 Z" fill="url(#hairg)" stroke="#3a2010" stroke-width="2"/>
<!-- headband -->
<path d="M270 234 L500 222 L502 284 L272 296 Z" fill="#fdfdfd" stroke="#555" stroke-width="2"/>
<path d="M322 254 q6 -8 12 0 q4 12 -10 14 q-18 0 -18 -16 q2 -20 22 -20 q26 2 24 26 q-4 24 -30 24" fill="none" stroke="#333" stroke-width="3"/>
<!-- eyes -->
<path d="M314 364 L343 285 L364 364 Z" fill="#fff" stroke="#3a2a20" stroke-width="1.500"/><path d="M414 364 L450 275 L466 364 Z" fill="#fff" stroke="#3a2a20" stroke-width="1.500"/><ellipse cx="345" cy="349" rx="13" ry="22" fill="#1f1f28"/>
<ellipse cx="431" cy="345" rx="13" ry="22" fill="#1f1f28"/>
<ellipse cx="343" cy="338" rx="5" ry="8" fill="#fff"/><ellipse cx="430" cy="334" rx="5" ry="8" fill="#fff"/>
<path d="M330 262 L362 300 M470 262 L420 292" stroke="#2a1a10" stroke-width="3"/>
<path d="M292 300 V350 M302 310 V345 M312 320 V342" stroke="#555" stroke-width="2"/>
<path d="M380 414 L395 404 L410 414" fill="none" stroke="#5a3a2a" stroke-width="3"/>
</g>
</g>
<!-- speech bubble -->
<g fill="#0000ff">
<path d="M265.600 208.700 C266.500 205.500 267.500 203 268.500 200.500 C270 197.500 273.500 193 278 189.500 C282 186.500 286 184.500 290.400 184 C296 183.300 310 183.200 330 183.300 C340 183.500 350 183.800 357.500 184.400 C364 185.200 370 186.500 374 188.200 C378 190 381 192.500 382.800 194.800 C385.500 198 387.300 200.800 388.300 203.600 C389.500 207 390.200 210 390.500 213.500 C391 220 391 227 391 234 L376 241.300 C376 237 375.900 233 375.700 230 C375.400 226 374.800 222.500 374 219 C373.200 215 372 211 370.700 208 C369 204.500 366.500 202 363 200.300 C360 198.500 356 196.800 352 195.900 C345 194 338 193 330 192.600 C320 192.400 305 192.700 284.500 193 L281.700 201.600 Z"/>
<path d="M266 216.900 L281.700 210 C280.300 212 279.300 213.800 278.600 215.700 C277.800 218 277.400 220 277.400 222 C277.300 226 277.600 230 278.100 234.300 C278.800 238 280 242 281.400 245.300 C283 249 285 253 286.900 256.300 C288 258 289 259.200 290.200 260.200 L335 275 C339 276 343 276.900 346.500 277.400 C351 278.300 356 278.500 359.700 278 C364 276.800 369 274.500 373 271.500 L364.100 282.700 C362 284 360 285 357.500 285.700 C356 286.500 354 287.100 352 287.400 C346 287.800 340 287.800 335 287.100 C327 286 318 284 310 281.600 C302 279 295 276.500 288 273.900 C284 272.500 280 271 277 269.500 C274.800 267.600 273 265.500 271.500 262.900 C269 259.500 267.300 256.500 266 253 C264.500 249.500 263.300 245.500 262.700 242 C262.200 238.500 262 234.500 262.200 231 C262.300 229.800 262.600 228.500 262.900 227.500 Z"/>
<path d="M376 242.600 L391.500 235.300 C392.200 239 392.700 241 393.300 243.300 C394 247 395 251 396.100 254.300 C397.300 258 398.800 261.300 400.500 264.200 C402.300 267.200 404.500 270 407.100 272 C410.500 274.700 414 276.500 418.100 277.400 C421.500 278 425 278.200 428.600 278 C427 280.200 425.400 282.200 423.600 284 C420.500 287 417.300 289.700 413.700 291.800 C410 293.500 406 294.600 401.600 295 C398 295.300 395 295.300 391.700 295 C387.500 294 383.500 292.500 379.600 290.700 L364.800 284 L377.900 274.400 L390.600 279.100 C388 275.500 385.800 271.500 384 267.500 C382.300 264 380.800 260.200 379.600 256.500 C378.200 252.500 377 248 376 242.600 Z"/>
</g>
<text x="282" y="245.600" font-family="'Liberation Sans',sans-serif" font-style="italic" font-size="33.500" fill="#0000ff" textLength="90.500" lengthAdjust="spacingAndGlyphs">!*?!!^?</text>
<!-- man + pen : zoomed coords, scale .42452 -->
<g transform="translate(600,160) scale(0.42452)">
<defs>
<linearGradient id="capg" gradientUnits="userSpaceOnUse" x1="100" y1="110" x2="190" y2="80"><stop offset="0" stop-color="#2a2620"/><stop offset=".25" stop-color="#4a443a"/><stop offset=".5" stop-color="#3e382e"/><stop offset=".8" stop-color="#6a6252"/><stop offset="1" stop-color="#3a342c"/></linearGradient>
<linearGradient id="barg" gradientUnits="userSpaceOnUse" x1="170" y1="280" x2="250" y2="250"><stop offset="0" stop-color="#2a2622"/><stop offset=".35" stop-color="#5c5446"/><stop offset=".6" stop-color="#3a342c"/><stop offset="1" stop-color="#1a1714"/></linearGradient>
<linearGradient id="grpg" gradientUnits="userSpaceOnUse" x1="232" y1="445" x2="312" y2="410"><stop offset="0" stop-color="#0a0a0a"/><stop offset=".45" stop-color="#1c1c1c"/><stop offset=".62" stop-color="#3c3c3c"/><stop offset=".75" stop-color="#121212"/><stop offset="1" stop-color="#050505"/></linearGradient>
<linearGradient id="nibg" gradientUnits="userSpaceOnUse" x1="295" y1="550" x2="350" y2="530"><stop offset="0" stop-color="#3a352e"/><stop offset=".5" stop-color="#8a8274"/><stop offset="1" stop-color="#3a352e"/></linearGradient>
<linearGradient id="suitg" x1="0" y1="0" x2="1" y2="1"><stop offset="0" stop-color="#3a3a3e"/><stop offset="1" stop-color="#1c1c20"/></linearGradient>
<filter id="soft3" x="-5%" y="-5%" width="110%" height="110%"><feGaussianBlur stdDeviation="1"/></filter>
</defs>
<g filter="url(#soft3)">
<!-- back leg -->
<path d="M40 385 L95 400 L60 450 L30 492 L-5 500 L-8 480 L15 455 L30 420 Z" fill="#25252a"/>
<!-- pen cap -->
<path d="M101 42 Q104 24 122 21.500 Q138 19 144 26 Q168 62 186 106 Q204 146 216 178 L149 188 Q132 144 116 96 Q106 64 101 42 Z" fill="url(#capg)"/>
<!-- barrel -->
<path d="M149 188 L216 178 L274 338 L213 350 L186 290 Z" fill="url(#barg)"/>
<path d="M148 186 L216 175.500 L217.500 180 L150 191Z" fill="#1a1714"/>
<!-- grip -->
<path d="M213 350 L274 338 L334 482 L274 514 Z" fill="url(#grpg)"/>
<path d="M270 506 L333 476 L337 487 L276 520Z" fill="#2a2826"/><path d="M274 514 L335 483 L336 486 L275 517Z" fill="#6a655e"/>
<!-- nib -->
<path d="M282 520 L335 490 L352 548 L346 603 L310 582 Z" fill="url(#nibg)"/>
<path d="M322 540 L345 598" stroke="#1a1714" stroke-width="2"/>
<circle cx="322" cy="540" r="3" fill="#111"/>
<!-- front leg -->
<path d="M60 395 L150 350 L205 372 L210 400 L188 500 L150 498 L158 420 L95 445 Z" fill="#2c2c31"/>
<path d="M160 420 L170 380 L200 385 L186 500 L168 500Z" fill="#3c3c42"/>
<!-- shoe -->
<path d="M148 497 L188 497 L206 515 L208 530 L150 530 L144 515Z" fill="#0e0e10"/>
<!-- torso / jacket -->
<path d="M122 252 L152 262 L180 292 L210 318 L222 332 L205 350 L182 362 L196 386 L172 402 L150 432 L100 440 L55 440 L30 420 L34 380 L55 330 L85 280 Z" fill="url(#suitg)"/>
<path d="M85 290 L120 330 L100 400 L60 430 L40 400 L55 340Z" fill="#34343a"/>
<!-- shirt + tie -->
<path d="M148 282 L176 296 L168 345 L150 350 Z" fill="#f0f0f0"/>
<path d="M152 296 L164 300 L166 420 L158 432 L150 418 Z" fill="#9a9aa0"/>
<!-- head -->
<ellipse cx="158" cy="250" rx="23" ry="29" fill="#b58c72" transform="rotate(-15 158 250)"/>
<path d="M124 238 Q120 205 150 196 Q180 194 186 218 Q170 212 152 222 Q140 240 140 262 Q126 256 124 238Z" fill="#4c4c4e"/>
<path d="M150 200 Q172 198 182 214 Q166 208 150 214Z" fill="#8a8a8c"/>
<path d="M160 270 Q172 276 180 268 L176 280 Q166 284 158 278Z" fill="#8a6450"/>
<!-- hands -->
<path d="M196 318 L214 300 L232 304 L236 322 L222 340 L204 338Z" fill="#c49a80"/>
<path d="M214 300 L232 304 L228 312 L212 310Z" fill="#dcb49a"/>
</g>
</g>
<!-- red text -->
<text id="rl1" x="248.500" y="378.500" font-family="'Liberation Sans',sans-serif" font-style="italic" font-size="26.500" fill="#ff0000" textLength="403" lengthAdjust="spacing">"Selalu Optimis dan Berusaha</text>
<text id="rl2" x="248.500" y="413" font-family="'Liberation Sans',sans-serif" font-style="italic" font-size="26.500" fill="#ff0000" textLength="495" lengthAdjust="spacing">dengan kemampuan apa adanya . . !"</text>
<text x="240" y="441.500" font-family="'Liberation Sans',sans-serif" font-size="10.500" fill="#666" textLength="56.500" lengthAdjust="spacingAndGlyphs">created by :</text>
<circle cx="308" cy="436.800" r="7.800" fill="#fff" stroke="#f20808" stroke-width="1.600"/>
<path d="M302.500 436 L305 432.500 L308 433.500 L309 435.500 L314.500 435.800 L314.500 437 L309 437.500 L310.500 443 L303.500 443.500 L304.500 439 Z" fill="#f20808"/>
<circle cx="305.800" cy="431.800" r="1.600" fill="#f20808"/>

</svg>
</div>

<div class="abs" style="left:0;top:83px;width:33px;height:450px;background:linear-gradient(180deg,#fdfdff 0,#f4f6fc 4px,#e6eaf7 8.500px,#d4d9ed 8.500px,#d4d9ed 100%)"></div>
<div class="abs" style="left:0;top:83px;width:1px;height:450px;background:#e9ecf7"></div>
<svg style="left:0;top:83px" width="34" height="450" viewBox="0 83 34 450">
<defs>
<linearGradient id="gTogL" x1="0" y1="0" x2="0" y2="1"><stop offset="0" stop-color="#b9bdcc"/><stop offset=".35" stop-color="#c6cadb"/><stop offset="1" stop-color="#cfd3e5"/></linearGradient><linearGradient id="gRect" x1="0" y1="0" x2="1" y2="1"><stop offset="0" stop-color="#fff"/><stop offset="1" stop-color="#a9c0d8"/></linearGradient>
<radialGradient id="gEll" cx=".4" cy=".35" r=".7"><stop offset="0" stop-color="#fff"/><stop offset="1" stop-color="#f7a8b4"/></radialGradient>
<linearGradient id="gWave" x1="0" y1="0" x2="0" y2="1"><stop offset="0" stop-color="#555"/><stop offset="1" stop-color="#c9c9c9"/></linearGradient>
<linearGradient id="gCan" x1="0" y1="0" x2="1" y2="0"><stop offset="0" stop-color="#3a9a1a"/><stop offset=".5" stop-color="#8fe060"/><stop offset="1" stop-color="#2f8a12"/></linearGradient>
</defs>
<!-- selector arrow -->
<path d="M10.500 90.500 L10.500 107 L14.200 103.600 L16.800 109.300 L19.600 108 L17 102.500 L22 102.500 Z" fill="#000"/>
<!-- node tool -->
<path d="M7 138 Q7 123 24 120" fill="none" stroke="#444" stroke-width="1"/>
<rect x="8.500" y="121.500" width="5" height="5" fill="#3a4be0" stroke="#2222cc"/>
<rect x="24.500" y="117.500" width="4" height="4" fill="#c9cbf6" stroke="#3a3ae0"/>
<rect x="5.500" y="136.500" width="4" height="4" fill="#c9cbf6" stroke="#3a3ae0"/>
<path d="M12.300 126.800 L26 133.500 L22.300 136.500 L20 140 Z" fill="#000"/>
<!-- tweak wave -->
<path d="M6 170 L6 162 Q12 162 13 155 Q15 148 21 149 Q26 150 25 155 Q23 152 20 154 Q19 158 22 160 Q25 162 28 161 L28 170 Z" fill="url(#gWave)" stroke="#555" stroke-width=".8"/>
<!-- zoom -->
<circle cx="14" cy="186" r="7.500" fill="#e9f2fb" stroke="#333" stroke-width="1.600"/>
<path d="M19.500 192 L27 200" stroke="#7a4a00" stroke-width="5" stroke-linecap="round"/>
<path d="M20 192.500 L26.500 199.500" stroke="#f4a91c" stroke-width="3" stroke-linecap="round"/>
<!-- rect -->
<rect x="7.500" y="210.500" width="19" height="19" fill="url(#gRect)" stroke="#222" stroke-width="1"/>
<!-- 3d box -->
<path d="M17 238.500 L26.500 243.500 L26.500 255.500 L17 261 L7.500 255.500 L7.500 243.500 Z" fill="#b9b6e6" stroke="#444" stroke-width="1.200"/>
<path d="M17 238.500 L26.500 243.500 L26.500 255.500 L19 251 Z" fill="#e6e4fb"/>
<path d="M7.500 255.500 L19 251 L26.500 255.500 L17 261 Z" fill="#3c3a96"/>
<path d="M7.500 243.500 L17 238.500 L19 251 L7.500 255.500Z" fill="#9a97d8"/>
<path d="M17 238.500 L26.500 243.500 L26.500 255.500 L17 261 L7.500 255.500 L7.500 243.500 Z" fill="none" stroke="#444" stroke-width="1.200"/>
<!-- ellipse -->
<circle cx="17" cy="280" r="9.700" fill="url(#gEll)" stroke="#222" stroke-width="1.100"/>
<!-- star -->
<path d="M13 300 L22 304 L21 314 L11 315.500 L6.500 308 Z" fill="#f4ec9a" stroke="#333" stroke-width="1"/>
<path d="M20 305.500 L22.600 311 L28.500 311.500 L24.300 315.700 L26 321.500 L20.500 318.500 L15.300 321.800 L16.300 315.800 L12 311.800 L17.600 311.200 Z" fill="#fbf4a6" stroke="#333" stroke-width="1"/>
<!-- spiral -->
<path d="M17.500 341 Q15 339 14 341.500 Q13.500 345 17.500 345.500 Q22 345 22 340 Q21.500 334.500 16 334.500 Q9.500 335.500 9.500 342 Q10.500 349.500 18 349.500 Q27 348 26.500 339 Q25 329.500 15 329.500 Q6.500 331 6.500 340 M26.500 339 L27 350" fill="none" stroke="#222" stroke-width="1.100"/>
<!-- pencil -->
<path d="M7 361 L12 360 L8 366 L13 366 Q9 377 15 380 Q21 382 24 374" fill="none" stroke="#222" stroke-width="1.100"/>
<path d="M22 358.500 L28.500 363.500 L21.500 375 L16.500 378.500 L16.500 371.500 Z" fill="#f6b51e" stroke="#333" stroke-width=".8"/>
<path d="M22 358.500 L28.500 363.500 L27 366 L20.500 361 Z" fill="#fbe58a"/>
<path d="M16.500 371.500 L21.500 375 L16.500 378.500 Z" fill="#fbe9cf" stroke="#333" stroke-width=".6"/>
<path d="M16.500 376 L18.500 377.300 L16.500 378.500Z" fill="#111"/>
<!-- pen (bezier) -->
<path d="M7 389.500 L19 389.500 Q13 391 14 398 Q15 408 6.500 409.500" fill="none" stroke="#222" stroke-width="1.100"/>
<path d="M9 409.500 L17 409.500" stroke="#222" stroke-width="1"/>
<rect x="4.500" y="407.500" width="4" height="4" fill="#fff" stroke="#222"/>
<circle cx="17" cy="409.500" r="1.300" fill="#fff" stroke="#222" stroke-width=".8"/>
<path d="M22 388.500 L28.500 392.500 L25 401 L20 399 Z" fill="#8fb6d8" stroke="#333" stroke-width=".8"/>
<path d="M20 399 L25 401 L23.500 404 L20 403Z" fill="#f3c431" stroke="#333" stroke-width=".6"/>
<path d="M20 403 L23.500 404 L18 409 Z" fill="#ddd" stroke="#333" stroke-width=".6"/>
<!-- calligraphy -->
<path d="M7 418.500 Q13 420 12 428 Q10 436 12 440 Q16 443 29 439.500 Q17 445 10 442.500 Q6 440 7.500 431 Q9 423 5 419 Z" fill="#111"/>
<path d="M24 418.500 L29 420.500 L27.500 425 L22.500 423 Z" fill="#6a8fc0" stroke="#333" stroke-width=".6"/>
<path d="M22.500 423 L27.500 425 L27 426.500 L22 424.500Z" fill="#d22"/>
<path d="M22 424.500 L27 426.500 L26 434 L17.500 438.500 L16 430 Z" fill="#f3c431" stroke="#222" stroke-width=".9"/>
<path d="M21.500 428 L17.800 437.500" stroke="#222" stroke-width=".8"/>
<path d="M19.500 428.500 L23.500 430 L21 435 L18 436 Z" fill="#fdf0b0"/>
<!-- text tool toggled -->
<rect x="2.500" y="446.500" width="28" height="27" rx="3" fill="url(#gTogL)" stroke="#4f5466"/>
<rect x="3.500" y="447.500" width="26" height="2" fill="#b9bdce" opacity=".7"/>
<path d="M24.500 449.500 L24.500 471.500 M22.500 449.500 L26.500 449.500 M22.500 471.500 L26.500 471.500" stroke="#222" stroke-width="1" fill="none"/>
<!-- spray -->
<path d="M17.500 489 L24 486.500 L28 499 L20.500 502.500 Q18 502 17.500 499 Z" fill="url(#gCan)" stroke="#2c6a14" stroke-width=".8"/>
<path d="M19 486 L23 484.500 L24 486.500 L19.500 488.200 Z" fill="#f4f4f4" stroke="#555" stroke-width=".7"/>
<g fill="#222"><rect x="7" y="481" width="1.500" height="1.500"/><rect x="10" y="483" width="1.500" height="1.500"/><rect x="6.500" y="485" width="1.500" height="1.500"/><rect x="12.500" y="481.500" width="1.500" height="1.500"/><rect x="9" y="487" width="1.500" height="1.500"/><rect x="12.500" y="485.500" width="1.500" height="1.500"/><rect x="14.500" y="483.500" width="1.200" height="1.200"/><rect x="11" y="489.500" width="1.500" height="1.500"/><rect x="14.500" y="487.500" width="1.200" height="1.200"/></g>
</svg>
<div class="t" style="left:5.500px;top:448px;font-size:26px;line-height:26px;font-weight:bold;color:#111;transform:scaleX(1.050);transform-origin:0 0">A</div>
<div class="t" style="left:12.500px;top:511px;font-size:14px;color:#5560b0;letter-spacing:-1.500px;font-weight:bold">&raquo;</div>

<div class="abs" style="left:962px;top:83px;width:1px;height:450px;background:#9a9a9a"></div>
<div class="abs" style="left:963px;top:83px;width:1px;height:450px;background:#fafafa"></div>
<div class="abs" style="left:964px;top:83px;width:60px;height:450px;background:linear-gradient(180deg,#fdfdff 0,#f4f6fc 4px,#e6eaf7 8.500px,#d4d9ed 8.500px,#d4d9ed 435px,#e2e6f4 450px)"></div>
<div class="abs" style="left:993px;top:83px;width:2px;height:450px;background:linear-gradient(180deg,#fbfcff 0,#e3e7f5 10px,#e3e7f5 100%)"></div>
<svg style="left:964px;top:83px" width="60" height="450" viewBox="964 83 60 450">
<defs>
<linearGradient id="gPg" x1="0" y1="0" x2="1" y2="1"><stop offset="0" stop-color="#fff"/><stop offset="1" stop-color="#dcdcd6"/></linearGradient>
<linearGradient id="gTog" x1="0" y1="0" x2="0" y2="1"><stop offset="0" stop-color="#b9bdcc"/><stop offset=".35" stop-color="#c6cadb"/><stop offset="1" stop-color="#cfd3e5"/></linearGradient><pattern id="gdots" width="2" height="2" patternUnits="userSpaceOnUse"><rect width="2" height="2" fill="#b9d08a"/><rect width="1" height="1" fill="#5a8a20"/><rect x="1" y="1" width="1" height="1" fill="#5a8a20"/></pattern>
</defs>
<!-- new -->
<path d="M972.500 90.500 L981.500 90.500 L985.500 94.500 L985.500 105.500 L972.500 105.500 Z" fill="url(#gPg)" stroke="#9a9a94"/>
<path d="M981.500 90.500 L981.500 94.500 L985.500 94.500" fill="#e9e9e4" stroke="#9a9a94" stroke-width=".8"/>
<!-- open -->
<path d="M971.500 130 L971.500 118.500 Q971.500 117.500 972.500 117.500 L977.500 117.500 L979 120 L985.500 120 L985.500 123 L987 123 L985.500 130.500 L971.500 130.500Z" fill="#d6d8ad" stroke="#8a8c66" stroke-width=".9"/>
<path d="M973.500 124 L987 124 L985.500 130 L972 130 Z" fill="#e8eac4" stroke="#9a9c76" stroke-width=".6"/>
<!-- save -->
<rect x="971.500" y="142.500" width="15" height="15" rx="1.500" fill="#3f67b8" stroke="#1f3f86"/>
<rect x="973.500" y="142.500" width="11" height="3" fill="#e0202a"/>
<rect x="973.500" y="145.500" width="11" height="5" fill="#f4f4f4"/>
<rect x="975.500" y="152.500" width="7" height="5" fill="#d0d4dc" stroke="#2a2a2a" stroke-width=".6"/>
<rect x="976.500" y="153.500" width="2.500" height="3" fill="#333"/>
<!-- print -->
<rect x="975.500" y="168.500" width="8" height="7" fill="#fafafa" stroke="#777"/>
<path d="M977 171.500 H982 M977 173.500 H982" stroke="#aaa" stroke-width=".8"/>
<rect x="971.500" y="175.500" width="15" height="8" rx="1.500" fill="#e4e4e0" stroke="#666"/>
<rect x="973.500" y="179" width="11" height="2" fill="#666"/>
<!-- separators col1 -->
<g stroke="#f6f7fc" stroke-width="1"><path d="M971 194.500 H987 M971 259.500 H987 M971 323.500 H987 M971 413.500 H987 M1001 117.500 H1017 M1001 259.500 H1017 M1001 479.500 H1017"/></g>
<g stroke="#b4b9cc" stroke-width="1"><path d="M971 193.500 H987 M971 258.500 H987 M971 322.500 H987 M971 412.500 H987 M1001 116.500 H1017 M1001 258.500 H1017 M1001 478.500 H1017" opacity=".7"/></g>
<!-- import -->
<path d="M975.500 206.500 L982.500 206.500 L986.500 210.500 L986.500 221.500 L975.500 221.500 Z" fill="url(#gPg)" stroke="#222"/>
<path d="M982.500 206.500 L982.500 210.500 L986.500 210.500" fill="none" stroke="#222" stroke-width=".8"/>
<path d="M971 214.500 H979" stroke="#000" stroke-width="1.400"/><path d="M978 211.500 L982 214.500 L978 217.500Z" fill="#000"/>
<!-- export -->
<path d="M971.500 233.500 L978.500 233.500 L982.500 237.500 L982.500 247.500 L971.500 247.500 Z" fill="url(#gPg)" stroke="#222"/>
<path d="M978.500 233.500 L978.500 237.500 L982.500 237.500" fill="none" stroke="#222" stroke-width=".8"/>
<path d="M977 240.500 H985" stroke="#000" stroke-width="1.400"/><path d="M984 237.500 L988 240.500 L984 243.500Z" fill="#000"/>
<!-- undo -->
<path d="M971.500 277 L979 271 L979 274.500 Q987 274.500 987 281 Q987 285.500 981 285.500 L979.500 285.500 Q983 284 983 281.500 Q983 279.500 979 279.500 L979 283 Z" fill="#f6d42a" stroke="#c49a0a" stroke-width=".9" stroke-linejoin="round"/>
<!-- redo -->
<path d="M987 303.500 L979.500 297.500 L979.500 301 Q971.500 301 971.500 307.500 Q971.500 311.500 977 311.500 L978.500 311.500 Q975.500 310 975.500 308 Q975.500 306 979.500 306 L979.500 309.500 Z" fill="url(#gdots)"/>
<!-- copy -->
<rect x="972.500" y="334.500" width="9" height="11" fill="#f4f4f2" stroke="#aaa"/>
<path d="M976.500 338.500 L986.500 338.500 L986.500 346.500 L983.500 349.500 L976.500 349.500Z" fill="#fafaf8" stroke="#8a8a86"/>
<path d="M978.500 341.500 H984.500 M978.500 343.500 H984.500 M978.500 345.500 H982.500" stroke="#aaa" stroke-width=".8"/>
<!-- cut -->
<path d="M973 360.500 L977.500 360.500 L980 370 L978 371 Z" fill="#d8d8d4" stroke="#8a8a86" stroke-width=".6"/>
<path d="M985 360.500 L980.500 360.500 L978 370 L980 371 Z" fill="#e4e4e0" stroke="#8a8a86" stroke-width=".6"/>
<rect x="971.500" y="370.500" width="6" height="5.500" rx="1.800" fill="#d8952a" stroke="#9a5f10" stroke-width=".9"/>
<rect x="980.500" y="370.500" width="6" height="5.500" rx="1.800" fill="#d8952a" stroke="#9a5f10" stroke-width=".9"/>
<rect x="973.500" y="372.300" width="2" height="2" fill="#f6dca8"/><rect x="982.500" y="372.300" width="2" height="2" fill="#f6dca8"/>
<!-- paste -->
<rect x="972.500" y="387.500" width="13" height="14" rx="1.500" fill="#c8862a" stroke="#8a5510"/>
<rect x="976.500" y="385.500" width="5" height="3" rx="1" fill="#b0b0aa" stroke="#666" stroke-width=".7"/>
<path d="M974.500 389.500 H983.500 V397 L981 399.500 H974.500Z" fill="#fafaf8" stroke="#aaa" stroke-width=".6"/>
<path d="M976 392.500 H982 M976 394.500 H982 M976 396.500 H980" stroke="#aaa" stroke-width=".8"/>
<!-- zoom icons -->
<g>
<circle cx="979" cy="431" r="7.300" fill="#dfe8f4" stroke="#222" stroke-width="1.400"/><path d="M984.500 437 L987 439.500" stroke="#111" stroke-width="2.600" stroke-linecap="round"/>
<rect x="974.500" y="427.500" width="9" height="7" fill="#fff" stroke="#222" stroke-width=".9" stroke-dasharray="1 1"/>
<circle cx="979" cy="457" r="7.300" fill="#dfe8f4" stroke="#222" stroke-width="1.400"/><path d="M984.500 463 L987 465.500" stroke="#111" stroke-width="2.600" stroke-linecap="round"/>
<rect x="974.500" y="452.500" width="5" height="5" fill="#f6e27a" stroke="#5a4a10" stroke-width=".8"/><rect x="977.500" y="455.500" width="5" height="5" fill="#f6d84a" stroke="#5a4a10" stroke-width=".8"/>
<circle cx="979" cy="483" r="7.300" fill="#dfe8f4" stroke="#222" stroke-width="1.400"/><path d="M984.500 489 L987 491.500" stroke="#111" stroke-width="2.600" stroke-linecap="round"/>
<rect x="975.500" y="478.500" width="6" height="9" fill="#e4e4e4" stroke="#333" stroke-width=".9"/>
</g>
<!-- snap col: toggle 1 -->
<rect x="996.500" y="86.500" width="25" height="23" rx="3" fill="url(#gTog)" stroke="#4f5466"/>
<path d="M1005.500 95 L1012 101" stroke="#000" stroke-width="1.500"/><path d="M1013.800 102.800 L1009 101.200 L1012 98 Z" fill="#000"/>
<path d="M1004 90 L1007 93 L1004 96 L1001 93Z" fill="#8aa0ff" stroke="#1a1ae0" stroke-width="1.100"/>
<path d="M1014.500 100 L1017.500 103 L1014.500 106 L1011.500 103Z" fill="#a8e0a0" stroke="#1a8a2a" stroke-width="1.100"/>
<!-- bbox -->
<path d="M1007 131.500 H1017 M1004.500 134 V144" stroke="#222" stroke-width="1" stroke-dasharray="1 1"/>
<path d="M1004.500 128.500 L1007 131 L1004.500 133.500 L1002 131Z" fill="#5a6aff" stroke="#1a1ae0" stroke-width=".9"/>
<!-- edges -->
<path d="M1014.500 154 V167 M1001 167.500 H1014" stroke="#4a9a4a" stroke-width="1.200" stroke-dasharray="1.200 1.200"/>
<!-- corners -->
<path d="M1014.500 180 V190 M1001 193.500 H1011" stroke="#222" stroke-width="1" stroke-dasharray="1 1"/>
<path d="M1014.500 190.500 L1017 193 L1014.500 195.500 L1012 193Z" fill="#7ab87a" stroke="#2a6a2a" stroke-width=".7"/>
<!-- item 4 -->
<path d="M1002 218.500 H1014 M1014.500 212 V218" stroke="#222" stroke-width="1" stroke-dasharray="1 1"/>
<path d="M1014.500 206 L1016.500 209 L1014.500 212 L1012.500 209Z" fill="#7ab87a" stroke="#2a6a2a" stroke-width=".6"/>
<!-- item 5 -->
<path d="M1014.500 233 V244 M1001 244.500 H1014" stroke="#222" stroke-width="1" stroke-dasharray="1 1"/>
<path d="M1004.500 233.500 L1007 236 L1004.500 238.500 L1002 236Z" fill="#a8e0a0" stroke="#2a8a2a" stroke-width=".8"/>
<!-- toggle nodes -->
<rect x="996.500" y="266.500" width="25" height="23" rx="3" fill="url(#gTog)" stroke="#4f5466"/>
<path d="M1002 281 Q1004 274 1009 273.500 Q1008 283 1018 285" fill="none" stroke="#555" stroke-width="1.100"/>
<path d="M1009.500 270.500 L1012.500 273.500 L1009.500 276.500 L1006.500 273.500Z" fill="#4a5aff" stroke="#1a1ae0" stroke-width=".9"/>
<!-- paths -->
<path d="M1001.500 298 Q1012 300 1011 310 M1007.500 307 L1011 310.500 L1017 304.500" fill="none" stroke="#1a8a1a" stroke-width="1.400"/>
<!-- intersection -->
<path d="M1001.500 336.500 L1016.500 323.500 M1002 331 L1017 327" stroke="#333" stroke-width="1"/>
<path d="M1009 327 L1011.500 329.500 L1009 332 L1006.500 329.500Z" fill="#7ab87a" stroke="#2a6a2a" stroke-width=".7"/>
<!-- cusp -->
<path d="M1002 349 Q1012 351 1011 359 Q1015 361 1016.500 355" fill="none" stroke="#444" stroke-width="1"/>
<rect x="1006.500" y="358.500" width="4" height="4" fill="#6a8ad0" stroke="#1a8a2a" stroke-width="1.100" transform="rotate(20 1008.500 360.500)"/>
<!-- smooth -->
<path d="M1002 375 Q1010 375 1010 382 Q1009 388 1016.500 381" fill="none" stroke="#444" stroke-width="1"/>
<rect x="1006.500" y="375.500" width="4" height="4" fill="#6a8ad0" stroke="#1a8a2a" stroke-width="1.100"/>
<!-- midpoints -->
<path d="M1002 413 L1015 401" stroke="#c83a3a" stroke-width="1"/>
<path d="M1003 409 L1006 413 M1005 407.500 L1008 411.500 M1010.500 402.500 L1013.500 406.500 M1012.500 400.500 L1015.500 404.500" stroke="#e02a2a" stroke-width="1.100"/>
<path d="M1008.500 404.500 L1011 407 L1008.500 409.500 L1006 407Z" fill="#7ab87a" stroke="#2a6a2a" stroke-width=".7"/>
<!-- obj centers -->
<path d="M1013.500 426 V439.500 H1001" fill="none" stroke="#333" stroke-width="1"/>
<circle cx="1006" cy="432" r="2" fill="#a8e0a0" stroke="#2a8a2a" stroke-width="1"/>
<!-- rotation center -->
<path d="M1002 458.500 H1009 M1005.500 455 V462" stroke="#222" stroke-width="1.200"/>
<path d="M1014.500 452 V465 M1001 465.500 H1014" stroke="#222" stroke-width="1.200" stroke-dasharray="1 1"/>
</svg>
<div class="t" style="left:972.500px;top:511px;font-size:14px;color:#5560b0;letter-spacing:-1.500px;font-weight:bold">&raquo;</div>
<div class="t" style="left:1003.500px;top:511px;font-size:14px;color:#5560b0;letter-spacing:-1.500px;font-weight:bold">&raquo;</div>

<div class="abs" style="left:936px;top:101px;width:18px;height:411px;background:#f4f4f4"></div>
<div class="abs" style="left:938px;top:104px;width:15px;height:406px;background:linear-gradient(90deg,#e6e6e6,#f1f1f1 40%,#f1f1f1 60%,#e6e6e6)"></div>
<svg style="left:942.500px;top:112px" width="8" height="5"><path d="M0 4.500 L3.750 0.300 L7.500 4.500Z" fill="#444"/></svg>
<svg style="left:942.500px;top:501px" width="8" height="5"><path d="M0 0.300 L3.750 4.500 L7.500 0.300Z" fill="#444"/></svg>
<div class="abs" style="left:938px;top:248px;width:15px;height:57px;box-sizing:border-box;border:1px solid #979797;border-radius:2px;background:linear-gradient(90deg,#f6f6f6,#e9e9e9 45%,#cfcfcf 55%,#d9d9d9)"></div>
<div class="abs" style="left:942px;top:273px;width:7px;height:1px;background:#555;box-shadow:0 2px 0 #555,0 4px 0 #555,0 1px 0 #fff,0 3px 0 #fff,0 5px 0 #fff"></div>
<div class="abs" style="left:33px;top:512px;width:929px;height:22px;background:#f0f0f0"></div>
<div class="abs" style="left:51px;top:515px;width:884px;height:15px;background:linear-gradient(180deg,#e6e6e6,#f1f1f1 40%,#f1f1f1 60%,#e6e6e6)"></div>
<svg style="left:57px;top:518px" width="5" height="9"><path d="M4.500 0 L0 4.500 L4.500 9Z" fill="#333"/></svg>
<svg style="left:924px;top:518px" width="5" height="9"><path d="M0.500 0 L5 4.500 L0.500 9Z" fill="#333"/></svg>
<div class="abs" style="left:283px;top:515px;width:404px;height:14px;box-sizing:border-box;border:1px solid #979797;border-radius:2px;background:linear-gradient(180deg,#f6f6f6,#e9e9e9 45%,#cfcfcf 55%,#d9d9d9)"></div>
<div class="abs" style="left:481px;top:519px;width:1px;height:7px;background:#555;box-shadow:2px 0 0 #555,4px 0 0 #555,1px 0 0 #fff,3px 0 0 #fff,5px 0 0 #fff"></div>
<svg style="left:938px;top:514px" width="16" height="17" viewBox="0 0 16 17"><defs><linearGradient id="cm1" x1="0" y1="0" x2="1" y2="1"><stop offset="0" stop-color="#2a9a3a"/><stop offset=".5" stop-color="#c8c0d0"/><stop offset="1" stop-color="#d03060"/></linearGradient></defs><path d="M2.500 1.500 L13.500 9.500 L5 15.500 Z" fill="url(#cm1)" stroke="#777" stroke-width=".8"/><path d="M4 9 L5.500 14 L8 12Z" fill="#4a4ad0" opacity=".8"/></svg>
<div class="abs" style="left:0;top:533px;width:1024px;height:66px;background:#f0f0f0"></div>
<div class="abs" style="left:0;top:535px;width:1009px;height:1px;background:#1e1e1e"></div>
<svg style="left:0;top:536px" width="1009" height="17" viewBox="0 0 1009 17" shape-rendering="crispEdges"><rect x="0" y="0" width="19" height="17" fill="#fff"/><rect x="19" y="0" width="17" height="17" fill="#000000"/><rect x="36" y="0" width="17" height="17" fill="#1a1a1a"/><rect x="53" y="0" width="17" height="17" fill="#333333"/><rect x="70" y="0" width="17" height="17" fill="#4d4d4d"/><rect x="87" y="0" width="17" height="17" fill="#666666"/><rect x="104" y="0" width="17" height="17" fill="#808080"/><rect x="121" y="0" width="17" height="17" fill="#999999"/><rect x="138" y="0" width="17" height="17" fill="#b3b3b3"/><rect x="155" y="0" width="17" height="17" fill="#cccccc"/><rect x="172" y="0" width="17" height="17" fill="#e6e6e6"/><rect x="189" y="0" width="17" height="17" fill="#ececec"/><rect x="206" y="0" width="17" height="17" fill="#f2f2f2"/><rect x="223" y="0" width="17" height="17" fill="#f9f9f9"/><rect x="240" y="0" width="17" height="17" fill="#ffffff"/><rect x="257" y="0" width="17" height="17" fill="#800000"/><rect x="274" y="0" width="17" height="17" fill="#ff0000"/><rect x="291" y="0" width="17" height="17" fill="#808000"/><rect x="308" y="0" width="17" height="17" fill="#ffff00"/><rect x="325" y="0" width="17" height="17" fill="#008000"/><rect x="342" y="0" width="17" height="17" fill="#00ff00"/><rect x="359" y="0" width="17" height="17" fill="#008080"/><rect x="376" y="0" width="17" height="17" fill="#00ffff"/><rect x="393" y="0" width="17" height="17" fill="#000080"/><rect x="410" y="0" width="17" height="17" fill="#0000ff"/><rect x="427" y="0" width="17" height="17" fill="#800080"/><rect x="444" y="0" width="17" height="17" fill="#ff00ff"/><rect x="461" y="0" width="17" height="17" fill="#2b0000"/><rect x="478" y="0" width="17" height="17" fill="#550000"/><rect x="495" y="0" width="17" height="17" fill="#800000"/><rect x="512" y="0" width="17" height="17" fill="#aa0000"/><rect x="529" y="0" width="17" height="17" fill="#d40000"/><rect x="546" y="0" width="17" height="17" fill="#ff0000"/><rect x="563" y="0" width="17" height="17" fill="#ff2a2a"/><rect x="580" y="0" width="17" height="17" fill="#ff5555"/><rect x="597" y="0" width="17" height="17" fill="#ff8080"/><rect x="614" y="0" width="17" height="17" fill="#ffaaaa"/><rect x="631" y="0" width="17" height="17" fill="#ffd5d5"/><rect x="648" y="0" width="17" height="17" fill="#280b0b"/><rect x="665" y="0" width="17" height="17" fill="#501616"/><rect x="682" y="0" width="17" height="17" fill="#782121"/><rect x="699" y="0" width="17" height="17" fill="#a02c2c"/><rect x="716" y="0" width="17" height="17" fill="#c83737"/><rect x="733" y="0" width="17" height="17" fill="#d35f5f"/><rect x="750" y="0" width="17" height="17" fill="#de8787"/><rect x="767" y="0" width="17" height="17" fill="#e9afaf"/><rect x="784" y="0" width="17" height="17" fill="#f4d7d7"/><rect x="801" y="0" width="17" height="17" fill="#241c1c"/><rect x="818" y="0" width="17" height="17" fill="#483737"/><rect x="835" y="0" width="17" height="17" fill="#6c5353"/><rect x="852" y="0" width="17" height="17" fill="#916f6f"/><rect x="869" y="0" width="17" height="17" fill="#ac9393"/><rect x="886" y="0" width="17" height="17" fill="#c8b7b7"/><rect x="903" y="0" width="17" height="17" fill="#e3dbdb"/><rect x="920" y="0" width="17" height="17" fill="#2b1100"/><rect x="937" y="0" width="17" height="17" fill="#552200"/><rect x="954" y="0" width="17" height="17" fill="#803300"/><rect x="971" y="0" width="17" height="17" fill="#aa4400"/><rect x="988" y="0" width="17" height="17" fill="#d45500"/><rect x="1005" y="0" width="3" height="17" fill="#ff6600"/></svg>
<svg style="left:0;top:536px" width="20" height="17" viewBox="0 0 20 17"><rect x="0" y="0" width="1.500" height="17" fill="#111"/><path d="M2 0.500 L19 16.500 M19 0.500 L2 16.500" stroke="#7a0c0c" stroke-width="1.400"/></svg>
<div class="abs" style="left:0;top:553px;width:1009px;height:1px;background:#fbfbfb"></div>
<svg style="left:1014px;top:537px" width="5" height="8"><path d="M4.500 0 L0.300 3.750 L4.500 7.500Z" fill="#000"/></svg>
<div class="abs" style="left:0;top:556px;width:1009px;height:15px;background:linear-gradient(180deg,#e8e8e8,#f2f2f2 40%,#f2f2f2 60%,#e8e8e8)"></div>
<svg style="left:6px;top:560px" width="5" height="8"><path d="M4.500 0 L0 4 L4.500 8Z" fill="#8a8a8a"/></svg>
<svg style="left:999px;top:560px" width="5" height="8"><path d="M0.500 0 L5 4 L0.500 8Z" fill="#333"/></svg>
<div class="abs" style="left:18px;top:557px;width:131px;height:13px;box-sizing:border-box;border:1px solid #979797;border-radius:2px;background:linear-gradient(180deg,#f6f6f6,#e9e9e9 45%,#cfcfcf 55%,#d9d9d9)"></div>
<div class="abs" style="left:79px;top:560px;width:1px;height:7px;background:#555;box-shadow:2px 0 0 #555,4px 0 0 #555,1px 0 0 #fff,3px 0 0 #fff,5px 0 0 #fff"></div>
<div class="abs" style="left:0;top:598px;width:1024px;height:2px;background:linear-gradient(180deg,#2e2e2e,#4a4a4a)"></div>
<div class="t" id="sfill" style="left:2px;top:572.500px;font-size:11px;line-height:13px">Fill:</div>
<div class="t" id="sstroke" style="left:2px;top:586.500px;font-size:11px;line-height:13px">Stroke:</div>
<div class="t" id="sna1" style="left:72px;top:572.500px;font-size:11px;line-height:13px">N/A</div>
<div class="t" id="sna2" style="left:72px;top:586.500px;font-size:11px;line-height:13px">N/A</div>
<div class="t" id="so" style="left:126px;top:579px;font-size:11px;line-height:13px">O:</div>
<div class="inp" style="left:140px;top:575px;width:27px;height:21px;border-color:#c4c7cc;padding:3px 0 0 3px;font-size:11px;color:#8a8a8a;background:#fafafa">100</div>
<div class="abs" style="left:167px;top:576px;width:10px;height:9px;box-sizing:border-box;border:1px solid #c9c9c9;background:#f6f6f6"></div><div class="abs" style="left:167px;top:586px;width:10px;height:9px;box-sizing:border-box;border:1px solid #c9c9c9;background:#f6f6f6"></div>
<svg style="left:169px;top:578px" width="6" height="15"><path d="M0 4 L3 0.500 L6 4Z" fill="#b0b0b0"/><path d="M0 11 L3 14.500 L6 11Z" fill="#b0b0b0"/></svg>
<div class="abs" style="left:180px;top:572px;width:1px;height:26px;background:#c9c9c9"></div><div class="abs" style="left:181px;top:572px;width:1px;height:26px;background:#fff"></div>
<svg style="left:185px;top:577px" width="17" height="17" viewBox="0 0 17 17"><path d="M1 9.500 Q8 2.500 15.500 9.500 Q8 15.500 1 9.500Z" fill="#fff" stroke="#111" stroke-width="1.200"/><circle cx="8.300" cy="9.300" r="3.300" fill="#111"/><path d="M3 5 L1.500 2.500 M6 3.500 L5.500 0.800 M9.500 3.300 L10 0.600 M12.500 4.500 L14.200 2.200" stroke="#111" stroke-width="1.100"/></svg>
<svg style="left:208px;top:576px" width="16" height="19" viewBox="0 0 16 19"><path d="M6 9 L5 5 Q4.500 1.500 8 1.500 Q11.500 1.500 12 6" fill="none" stroke="#222" stroke-width="1.400"/><path d="M2.500 9.500 L11.500 8.500 L12.500 16 L3.500 17.500Z" fill="#f8ef9a" stroke="#222" stroke-width="1"/><rect x="6.500" y="11.500" width="2" height="3" fill="#222"/></svg>
<div class="abs" style="left:227px;top:572px;width:68px;height:26px;box-sizing:border-box;border:1px solid #b0b0b0;border-top-color:#c9c9c9;background:#fff"></div>
<div class="abs" style="left:278px;top:574px;width:16px;height:23px;box-sizing:border-box;border:1px solid #8a8a8a;background:linear-gradient(180deg,#f6f6f6,#e3e3e3 50%,#cfcfcf)"></div>
<svg style="left:282px;top:583px" width="8" height="5"><path d="M0.500 0.500 L7.500 0.500 L4 4.500 Z" fill="#111"/></svg>
<div class="t" id="slayer" style="left:231px;top:579.500px;font-size:9.800px;line-height:12px;font-weight:bold"><span style="font-size:7px;position:relative;top:-1px">&bull;</span>Layer 1</div>
<div class="t" id="smsg" style="left:301px;top:578.500px;font-size:11.680px;line-height:15px"><b>Click</b> to select or create text, <b>drag</b> to create flowed text; then type.</div>
<div class="abs" style="left:864px;top:572px;width:1px;height:26px;background:#c9c9c9"></div><div class="abs" style="left:865px;top:572px;width:1px;height:26px;background:#fff"></div>
<div class="t" id="sx" style="left:868px;top:572px;font-size:10px;line-height:13px">X:</div>
<div class="t" id="sy" style="left:868px;top:586px;font-size:10px;line-height:13px">Y:</div>
<div class="t" id="sxv" style="left:886px;top:572px;font-size:11.500px;line-height:13px;font-family:'Liberation Mono',monospace">-42,88</div>
<div class="t" id="syv" style="left:886px;top:586px;font-size:11.500px;line-height:13px;font-family:'Liberation Mono',monospace">185,09</div>
<div class="t" id="sz" style="left:937px;top:579px;font-size:11px;line-height:13px">Z:</div>
<div class="inp" style="left:948px;top:575px;width:46px;height:21px;padding:3px 0 0 8.400px;font-size:10.700px;border-right:0">77%</div>
<div class="abs" style="left:994px;top:576px;width:10px;height:9px;box-sizing:border-box;border:1px solid #b7bac6;background:linear-gradient(180deg,#fdfdfd,#e4e5ea)"></div><div class="abs" style="left:994px;top:586px;width:10px;height:9px;box-sizing:border-box;border:1px solid #b7bac6;background:linear-gradient(180deg,#fdfdfd,#e4e5ea)"></div>
<svg style="left:996px;top:578px" width="6" height="15"><path d="M0 4 L3 0.500 L6 4Z" fill="#4a5fb0"/><path d="M0 11 L3 14.500 L6 11Z" fill="#4a5fb0"/></svg>
<svg style="left:1011px;top:587px" width="10" height="10"><g fill="#b8b8b8"><rect x="7" y="1" width="2" height="2"/><rect x="4" y="4" width="2" height="2"/><rect x="7" y="4" width="2" height="2"/><rect x="1" y="7" width="2" height="2"/><rect x="4" y="7" width="2" height="2"/><rect x="7" y="7" width="2" height="2"/></g></svg>
</div>
</body>
</html>
